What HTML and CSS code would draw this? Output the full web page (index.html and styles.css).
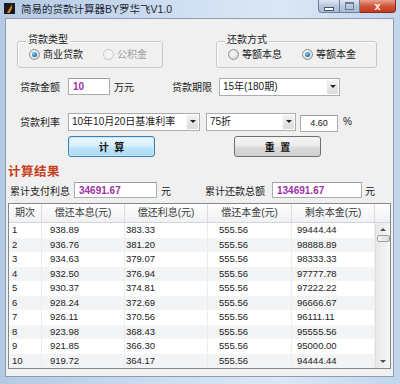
FILE: index.html
```
<!DOCTYPE html>
<html>
<head>
    <title>简易的贷款计算器</title>
    <link rel="stylesheet" href="styles.css">
</head>
<body>
<div class="window">
    <div class="titlebar">
        <svg class="app-icon" width="11" height="11" viewBox="0 0 11 11">
            <rect width="11" height="11" fill="#1a1a1a"/>
            <path d="M3 10 C4 7 6 5 8 1 C8 4 7 7 5 10 Z" fill="#e8701c"/>
            <path d="M5 10 C6 8 7 6 8 4" stroke="#f6c040" stroke-width="0.8" fill="none"/>
        </svg>
        <span class="title">简易的贷款计算器BY罗华飞V1.0</span>
        <div class="caption-buttons">
            <div class="cap-btn min"><span class="min-bar"></span></div>
            <div class="cap-btn max"><span class="max-box"></span></div>
            <div class="cap-btn close">x</div>
        </div>
    </div>

    <div class="client">
        <div class="groups">
            <div class="group group-type">
                <span class="legend">贷款类型</span>
                <div class="radio-row">
                    <span class="radio checked"></span><span class="radio-text">商业贷款</span>
                    <span class="radio disabled gap"></span><span class="radio-text grey">公积金</span>
                </div>
            </div>
            <div class="group group-way">
                <span class="legend">还款方式</span>
                <div class="radio-row">
                    <span class="radio"></span><span class="radio-text">等额本息</span>
                    <span class="radio checked gap"></span><span class="radio-text">等额本金</span>
                </div>
            </div>
        </div>

        <div class="row row-amount">
            <span class="lbl lbl-first">贷款金额</span>
            <div class="field amount">10</div>
            <span class="unit unit-wan">万元</span>
            <span class="lbl lbl-term">贷款期限</span>
            <div class="combo term"><span class="combo-text">15年(180期)</span><span class="combo-arrow"></span></div>
        </div>

        <div class="row row-rate">
            <span class="lbl lbl-first">贷款利率</span>
            <div class="combo base"><span class="combo-text">10年10月20日基准利率</span><span class="combo-arrow"></span></div>
            <div class="combo discount"><span class="combo-text">75折</span><span class="combo-arrow"></span></div>
            <div class="field rate">4.60</div>
            <span class="unit unit-pct">%</span>
        </div>

        <div class="row row-buttons">
            <button class="btn btn-default">计&nbsp;&nbsp;算</button>
            <button class="btn btn-reset">重&nbsp;&nbsp;置</button>
        </div>

        <div class="result-title">计算结果</div>

        <div class="row row-result">
            <span class="lbl lbl-interest">累计支付利息</span>
            <div class="field total-interest">34691.67</div>
            <span class="unit unit-yuan1">元</span>
            <span class="lbl lbl-total">累计还款总额</span>
            <div class="field total-sum">134691.67</div>
            <span class="unit unit-yuan2">元</span>
        </div>

        <div class="list">
            <div class="list-head">
                <div class="hcell">期次</div>
                <div class="hcell">偿还本息(元)</div>
                <div class="hcell">偿还利息(元)</div>
                <div class="hcell">偿还本金(元)</div>
                <div class="hcell">剩余本金(元)</div>
                <div class="hcell hcell-end"></div>
            </div>
            <div class="list-body">
                <div class="rows">
                    <div class="lrow"><span>1</span><span>938.89</span><span>383.33</span><span>555.56</span><span>99444.44</span></div>
                    <div class="lrow"><span>2</span><span>936.76</span><span>381.20</span><span>555.56</span><span>98888.89</span></div>
                    <div class="lrow"><span>3</span><span>934.63</span><span>379.07</span><span>555.56</span><span>98333.33</span></div>
                    <div class="lrow"><span>4</span><span>932.50</span><span>376.94</span><span>555.56</span><span>97777.78</span></div>
                    <div class="lrow"><span>5</span><span>930.37</span><span>374.81</span><span>555.56</span><span>97222.22</span></div>
                    <div class="lrow"><span>6</span><span>928.24</span><span>372.69</span><span>555.56</span><span>96666.67</span></div>
                    <div class="lrow"><span>7</span><span>926.11</span><span>370.56</span><span>555.56</span><span>96111.11</span></div>
                    <div class="lrow"><span>8</span><span>923.98</span><span>368.43</span><span>555.56</span><span>95555.56</span></div>
                    <div class="lrow"><span>9</span><span>921.85</span><span>366.30</span><span>555.56</span><span>95000.00</span></div>
                    <div class="lrow"><span>10</span><span>919.72</span><span>364.17</span><span>555.56</span><span>94444.44</span></div>
                </div>
                <div class="vscroll">
                    <span class="sb-arrow up"></span>
                    <span class="sb-thumb"></span>
                    <span class="sb-arrow down"></span>
                </div>
            </div>
        </div>
    </div>
</div>
</body>
</html>
```

FILE: styles.css
```
body {
    margin: 0;
    background: #c6d8ee;
    font-family: "Liberation Sans", "Noto Sans CJK SC", sans-serif;
    font-size: 10px;
    color: #1a1a1a;
}

.window {
    width: 400px;
    height: 384px;
    overflow: hidden;
    background: linear-gradient(to right, #b4c9e3, #cfdff1 45%, #dbe7f5 70%, #c2d5ec);
}

/* title bar */
.titlebar {
    height: 19px;
    display: flex;
    align-items: flex-start;
}

.app-icon {
    margin: 3px 0 0 4px;
}

.title {
    margin: 3px 0 0 6px;
    font-size: 10.5px;
    line-height: 12px;
    color: #1c2533;
}

.caption-buttons {
    margin-left: auto;
    margin-right: 4px;
    display: flex;
    height: 13px;
}

.cap-btn {
    height: 12px;
    border: 1px solid #6f7f98;
    border-top: none;
    display: flex;
    align-items: center;
    justify-content: center;
}

.cap-btn.min {
    width: 20px;
    border-radius: 0 0 0 4px;
    background: linear-gradient(#dfe8f4, #b7c7dc 50%, #a9bbd3);
}

.cap-btn.max {
    width: 19px;
    border-left: none;
    background: linear-gradient(#dfe8f4, #b7c7dc 50%, #a9bbd3);
}

.cap-btn.close {
    width: 35px;
    border-left: none;
    border-color: #8a2a1a;
    border-radius: 0 0 4px 0;
    background: linear-gradient(#e9a28e, #d0563a 50%, #c23b1e);
    color: #fff;
    font-weight: bold;
    font-size: 11px;
    line-height: 10px;
}

.min-bar {
    width: 8px;
    height: 2px;
    margin-top: 5px;
    background: #fff;
    border: 1px solid #44556e;
}

.max-box {
    width: 7px;
    height: 5px;
    border: 1px solid #6a7a92;
    border-top-width: 2px;
    background: transparent;
}

/* client area */
.client {
    margin-left: 6px;
    width: 387px;
    height: 357px;
    background: #f0f0f0;
    box-shadow: 0 0 0 1px #8b9db5;
    display: flex;
    flex-direction: column;
}

.groups {
    display: flex;
    margin-top: 22px;
    height: 27px;
}

.group {
    position: relative;
    box-sizing: border-box;
    height: 27px;
    border: 1px solid #c5c9cd;
    border-radius: 3px;
    box-shadow: inset 1px 1px 0 #fff;
}

.group-type {
    margin-left: 11px;
    width: 146px;
}

.group-way {
    margin-left: 53px;
    width: 161px;
}

.legend {
    position: absolute;
    top: -8px;
    left: 8px;
    padding: 0 2px;
    line-height: 12px;
    background: #f0f0f0;
}

.radio-row {
    display: flex;
    align-items: center;
    height: 25px;
    padding-left: 11px;
}

.radio {
    box-sizing: border-box;
    width: 11px;
    height: 11px;
    border: 1px solid #8e8f8f;
    border-radius: 50%;
    background: radial-gradient(circle at 40% 40%, #ffffff, #dcdcdc 70%);
    display: flex;
    align-items: center;
    justify-content: center;
}

.radio.checked::after {
    content: "";
    width: 5px;
    height: 5px;
    border-radius: 50%;
    background: radial-gradient(circle at 40% 35%, #7fd0f7, #1d6fb0 70%, #184f7c);
}

.radio.disabled {
    border-color: #c4c4c4;
    background: #f4f4f4;
}

.radio.gap {
    margin-left: 20px;
}

.radio-text {
    margin-left: 3px;
    line-height: 12px;
}

.radio-text.grey {
    color: #a0a0a0;
}

/* form rows */
.row {
    display: flex;
    align-items: center;
}

.row-amount {
    margin-top: 10px;
    height: 17px;
}

.row-rate {
    margin-top: 18px;
    height: 17px;
}

.lbl-first {
    margin-left: 14px;
    width: 48px;
}

.field {
    box-sizing: border-box;
    height: 17px;
    border: 1px solid #abadb3;
    border-top-color: #9a9ca3;
    background: #fff;
    padding: 0 4px;
    line-height: 15px;
    color: #a12fa6;
    font-weight: bold;
}

.amount {
    width: 42px;
}

.unit-wan {
    margin-left: 4px;
    width: 58px;
}

.lbl-term {
    width: 47px;
}

.combo {
    box-sizing: border-box;
    height: 18px;
    border: 1px solid #abadb3;
    background: #fff;
    display: flex;
    align-items: center;
}

.combo-text {
    flex: 1;
    padding-left: 3px;
    line-height: 14px;
}

.combo-arrow {
    width: 11px;
    height: 14px;
    margin-right: 1px;
    background: linear-gradient(#f2f2f2, #dcdcdc);
    display: flex;
    align-items: center;
    justify-content: center;
}

.combo-arrow::after {
    content: "";
    border-left: 3px solid transparent;
    border-right: 3px solid transparent;
    border-top: 3px solid #222;
}

.term {
    width: 121px;
}

.base {
    width: 132px;
}

.discount {
    margin-left: 6px;
    width: 90px;
}

.rate {
    margin-left: 4px;
    margin-top: 3px;
    width: 38px;
    text-align: center;
    font-weight: normal;
    color: #1a1a1a;
    font-size: 9px;
}

.unit-pct {
    margin-left: 5px;
}

/* buttons */
.row-buttons {
    margin-top: 6px;
    height: 21px;
}

.btn {
    box-sizing: border-box;
    width: 87px;
    height: 21px;
    border: 1px solid #707070;
    border-radius: 3px;
    font-family: "Liberation Sans", "Noto Sans CJK SC", sans-serif;
    font-size: 10px;
    font-weight: bold;
    color: #111;
    padding: 0;
    background: linear-gradient(#f4f4f4, #ebebeb 48%, #dcdcdc 52%, #cfcfcf);
}

.btn-default {
    margin-left: 62px;
    border-color: #3c7fb1;
    background: linear-gradient(#eaf6fd, #d9f0fc 48%, #bee6fd 52%, #a7d9f5);
    box-shadow: inset 0 0 0 1px #c8e8f8;
}

.btn-reset {
    margin-left: 79px;
}

/* results */
.result-title {
    margin: 8px 0 0 2px;
    height: 14px;
    line-height: 14px;
    font-size: 12.5px;
    font-weight: bold;
    color: #c9401c;
    letter-spacing: 0.5px;
}

.row-result {
    margin-top: 3px;
    height: 16px;
}

.lbl-interest {
    margin-left: 4px;
    width: 64px;
}

.total-interest {
    width: 83px;
    height: 16px;
}

.unit-yuan1 {
    margin-left: 4px;
    width: 44px;
}

.lbl-total {
    width: 67px;
}

.total-sum {
    width: 90px;
    height: 16px;
}

.unit-yuan2 {
    margin-left: 3px;
}

/* list */
.list {
    margin: 5px 0 0 2px;
    box-sizing: border-box;
    width: 383px;
    height: 166px;
    border: 1px solid #828790;
    background: #fff;
}

.list-head {
    display: flex;
    height: 19px;
    background: linear-gradient(#ffffff, #f7f8f9 50%, #eef0f3);
    border-bottom: 1px solid #d5d5d5;
    box-sizing: border-box;
}

.hcell {
    box-sizing: border-box;
    border-right: 1px solid #dadcde;
    text-align: center;
    line-height: 18px;
    color: #3a3a3a;
}

.hcell:nth-child(1) { width: 33px; }
.hcell:nth-child(2) { width: 83px; }
.hcell:nth-child(3) { width: 83px; }
.hcell:nth-child(4) { width: 84px; }
.hcell:nth-child(5) { width: 83px; }

.hcell-end {
    flex: 1;
    border-right: none;
}

.list-body {
    display: flex;
    height: 145px;
}

.rows {
    width: 366px;
}

.lrow {
    display: flex;
    height: 14.5px;
    line-height: 14.5px;
    font-size: 9.5px;
    color: #222;
}

.lrow:nth-child(even) {
    background: #f3f4f5;
}

.lrow span {
    box-sizing: border-box;
    border-right: 1px solid #ececec;
}

.lrow span:nth-child(1) { width: 33px; padding-left: 3px; }
.lrow span:nth-child(2) { width: 83px; padding-left: 8px; }
.lrow span:nth-child(3) { width: 83px; padding-left: 1px; }
.lrow span:nth-child(4) { width: 84px; padding-left: 11px; }
.lrow span:nth-child(5) { width: 83px; padding-left: 5px; }

.vscroll {
    flex: 1;
    background: linear-gradient(to right, #e8e8e8, #f6f6f6);
    border-left: 1px solid #e0e0e0;
    display: flex;
    flex-direction: column;
    align-items: center;
}

.sb-arrow {
    width: 0;
    height: 0;
    border-left: 3px solid transparent;
    border-right: 3px solid transparent;
}

.sb-arrow.up {
    margin-top: 5px;
    border-bottom: 3px solid #505050;
}

.sb-arrow.down {
    margin-top: auto;
    margin-bottom: 5px;
    border-top: 3px solid #505050;
}

.sb-thumb {
    margin-top: 4px;
    width: 11px;
    height: 5px;
    border: 1px solid #9ea3ab;
    border-radius: 2px;
    background: linear-gradient(to right, #f4f4f4, #dcdcdc);
}
```
